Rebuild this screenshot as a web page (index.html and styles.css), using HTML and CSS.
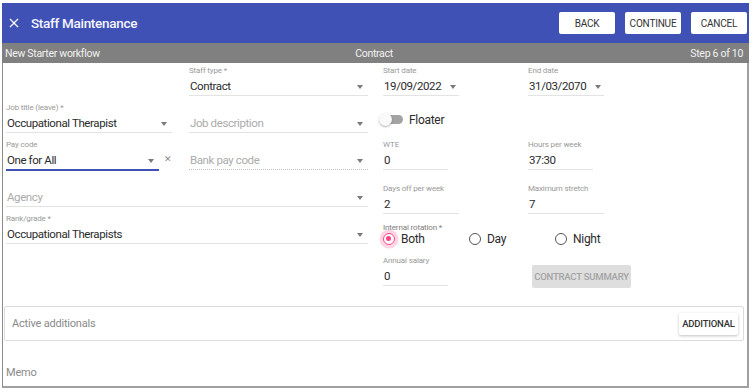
FILE: index.html
```html
<!DOCTYPE html>
<html lang="en">
<head>
    <meta charset="UTF-8">
    <meta name="viewport" content="width=device-width, initial-scale=1.0">
    <title>Staff Maintenance</title>
    <link rel="stylesheet" href="styles.css">
</head>
<body>
    <div class="app">
        <header class="toolbar">
            <span class="toolbar-close">
                <svg viewBox="0 0 24 24">
                    <path d="M19 6.41L17.59 5 12 10.59 6.41 5 5 6.41 10.59 12 5 17.59 6.41 19 12 13.41 17.59 19 19 17.59 13.41 12z"/>
                </svg>
            </span>
            <h1 class="toolbar-title">Staff Maintenance</h1>
            <div class="toolbar-actions">
                <button class="btn">Back</button>
                <button class="btn">Continue</button>
                <button class="btn">Cancel</button>
            </div>
        </header>

        <div class="stepbar">
            <span>New Starter workflow</span>
            <span class="stepbar-center">Contract</span>
            <span class="stepbar-right">Step 6 of 10</span>
        </div>

        <div class="panel">
            <div class="form">
                <!-- левая часть -->
                <div class="form-left">
                    <div class="field"></div>
                    <div class="field">
                        <div class="field-label">Staff type *</div>
                        <div class="field-control">Contract <i class="arrow"></i></div>
                    </div>

                    <div class="field">
                        <div class="field-label">Job title (leave) *</div>
                        <div class="field-control">Occupational Therapist <i class="arrow"></i></div>
                    </div>
                    <div class="field">
                        <div class="field-label"></div>
                        <div class="field-control placeholder">Job description <i class="arrow"></i></div>
                    </div>

                    <div class="field">
                        <div class="field-label">Pay code</div>
                        <div class="field-row">
                            <div class="field-control focused">One for All <i class="arrow"></i></div>
                            <span class="field-clear">&#x2715;</span>
                        </div>
                    </div>
                    <div class="field">
                        <div class="field-label"></div>
                        <div class="field-control placeholder disabled">Bank pay code <i class="arrow"></i></div>
                    </div>

                    <div class="field wide">
                        <div class="field-label"></div>
                        <div class="field-control placeholder">Agency <i class="arrow"></i></div>
                    </div>

                    <div class="field wide">
                        <div class="field-label">Rank/grade *</div>
                        <div class="field-control">Occupational Therapists <i class="arrow"></i></div>
                    </div>
                </div>

                <!-- правая часть -->
                <div class="form-right">
                    <div class="form-row">
                        <div class="field date">
                            <div class="field-label">Start date</div>
                            <div class="field-control">19/09/2022 <i class="arrow"></i></div>
                        </div>
                        <div class="field date">
                            <div class="field-label">End date</div>
                            <div class="field-control">31/03/2070 <i class="arrow"></i></div>
                        </div>
                    </div>

                    <div class="form-row toggle-row">
                        <label class="toggle">
                            <span class="toggle-track"><span class="toggle-thumb"></span></span>
                            Floater
                        </label>
                    </div>

                    <div class="form-row spaced">
                        <div class="field short">
                            <div class="field-label">WTE</div>
                            <div class="field-control">0</div>
                        </div>
                        <div class="field short">
                            <div class="field-label">Hours per week</div>
                            <div class="field-control">37:30</div>
                        </div>
                    </div>

                    <div class="form-row">
                        <div class="field date">
                            <div class="field-label">Days off per week</div>
                            <div class="field-control">2</div>
                        </div>
                        <div class="field date">
                            <div class="field-label">Maximum stretch</div>
                            <div class="field-control">7</div>
                        </div>
                    </div>

                    <div class="radio-group">
                        <div class="field-label">Internal rotation *</div>
                        <div class="radio-options">
                            <span class="radio checked"><i class="radio-dot"></i>Both</span>
                            <span class="radio"><i class="radio-dot"></i>Day</span>
                            <span class="radio"><i class="radio-dot"></i>Night</span>
                        </div>
                    </div>

                    <div class="form-row">
                        <div class="field short">
                            <div class="field-label">Annual salary</div>
                            <div class="field-control">0</div>
                        </div>
                        <div class="summary-cell">
                            <button class="btn btn-disabled">Contract summary</button>
                        </div>
                    </div>
                </div>
            </div>

            <div class="additionals">
                <span>Active additionals</span>
                <button class="btn">Additional</button>
            </div>

            <div class="memo">Memo</div>
        </div>
    </div>
</body>
</html>
```

FILE: styles.css
```css
/* Общие стили */
body {
    margin: 0;
    font-family: Roboto, "Noto Sans", sans-serif;
    color: #2b2b2b;
    background: #fff;
}

.app {
    width: 747px;
    margin: 3px 0 0 2px;
}

/* Верхняя панель */
.toolbar {
    height: 40px;
    background-color: #3f51b5;
    display: flex;
    align-items: center;
    padding: 0 2px 0 6px;
    box-sizing: border-box;
}

.toolbar-close {
    width: 12px;
    height: 12px;
    display: flex;
}

.toolbar-close svg {
    width: 12px;
    height: 12px;
    fill: #fff;
    transform: scale(1.3);
}

.toolbar-title {
    margin: 0 0 0 11px;
    font-size: 13.5px;
    font-weight: 500;
    letter-spacing: -0.3px;
    color: #f4f4ff;
    flex: 1;
}

.toolbar-actions {
    display: flex;
    gap: 10px;
}

.btn {
    font-family: Roboto, sans-serif;
    font-size: 10px;
    font-weight: 400;
    letter-spacing: -0.2px;
    text-transform: uppercase;
    color: #333;
    background-color: #fff;
    border: none;
    border-radius: 2px;
    height: 22px;
    padding: 0;
    cursor: pointer;
}

.toolbar .btn {
    width: 56px;
}

/* Полоса шагов */
.stepbar {
    height: 20px;
    background-color: #808080;
    color: #f2f2f2;
    font-size: 10.5px;
    letter-spacing: -0.3px;
    display: grid;
    grid-template-columns: 1fr auto 1fr;
    align-items: center;
    padding: 0 6px 0 3px;
}

.stepbar-right {
    text-align: right;
}

/* Рамка формы */
.panel {
    height: 325px;
    border-left: 1px solid #8c8c8c;
    border-right: 2px solid #a0a0a0;
    border-bottom: 2px solid #a0a0a0;
    box-sizing: border-box;
    padding: 0 2px 0 3px;
}

.form {
    display: flex;
    gap: 15px;
}

.form-left {
    width: 362px;
    display: grid;
    grid-template-columns: 166px 179px;
    column-gap: 17px;
    grid-auto-rows: 37px;
}

.form-right {
    flex: 1;
}

.form-row {
    display: grid;
    grid-template-columns: 145px 1fr;
    height: 37px;
}

.form-row.spaced {
    margin-bottom: 7px;
}

/* Поля */
.field {
    padding-top: 3px;
    box-sizing: border-box;
}

.field.wide {
    grid-column: span 2;
}

.field.date {
    width: 76px;
}

.field.short {
    width: 65px;
}

.field-label {
    height: 10px;
    line-height: 10px;
    font-size: 8px;
    letter-spacing: -0.15px;
    color: #999;
    white-space: nowrap;
}

.field-control {
    margin-top: 2px;
    height: 17px;
    line-height: 17px;
    font-size: 11.5px;
    letter-spacing: -0.4px;
    border-bottom: 1px solid #e3e3e3;
    display: flex;
    justify-content: space-between;
    align-items: center;
    padding-left: 1px;
}

.field-control.placeholder {
    color: #ababab;
}

.field-control.disabled {
    border-bottom: 1px dotted #c4c4c4;
}

.field-control.focused {
    border-bottom: 1px solid #3f51b5;
    width: 155px;
    box-shadow: 0 1px 0 #3f51b5;
}

.field-row {
    display: flex;
    align-items: flex-start;
    gap: 5px;
}

.field-clear {
    margin-top: 4px;
    font-size: 9px;
    color: #8a8a8a;
}

.arrow {
    width: 0;
    height: 0;
    border-left: 3.5px solid transparent;
    border-right: 3.5px solid transparent;
    border-top: 4px solid #7a7a7a;
    margin-right: 5px;
}

.field.date .arrow {
    margin-right: 3px;
}

/* Переключатель */
.toggle-row {
    display: flex;
    align-items: center;
}

.toggle {
    display: flex;
    align-items: center;
    gap: 6px;
    font-size: 12px;
    letter-spacing: -0.3px;
    color: #2b2b2b;
    margin: 2px 0 0 -3px;
}

.toggle-track {
    position: relative;
    width: 23px;
    height: 9px;
    border-radius: 5px;
    background-color: #a3a3a3;
}

.toggle-thumb {
    position: absolute;
    top: -2px;
    left: -1px;
    width: 13px;
    height: 13px;
    border-radius: 50%;
    background-color: #fafafa;
    box-shadow: 0 1px 2px rgba(0, 0, 0, 0.3);
}

/* Радиокнопки */
.radio-group {
    height: 35px;
    padding-top: 5px;
    box-sizing: border-box;
}

.radio-group .field-label {
    color: #7d7d7d;
}

.radio-options {
    display: flex;
    margin-top: -1px;
}

.radio {
    display: flex;
    align-items: center;
    gap: 6px;
    width: 86px;
    font-size: 12px;
    letter-spacing: -0.3px;
}

.radio-dot {
    position: relative;
    width: 12px;
    height: 12px;
    border: 1.5px solid #555;
    border-radius: 50%;
    box-sizing: border-box;
}

.radio.checked .radio-dot {
    border-color: #ff4081;
    box-shadow: 0 0 0 3.5px rgba(255, 64, 129, 0.22);
}

.radio.checked .radio-dot::after {
    content: "";
    position: absolute;
    top: 2px;
    left: 2px;
    width: 5px;
    height: 5px;
    border-radius: 50%;
    background-color: #ff4081;
}

.summary-cell {
    padding: 12px 0 0 4px;
}

.btn-disabled {
    width: 99px;
    height: 23px;
    background-color: #dedede;
    color: #a3a3a3;
    font-size: 9.5px;
    font-weight: 500;
}

/* Дополнительные */
.additionals {
    margin: 16px 1px 0 -2px;
    height: 35px;
    border: 1px solid #dcdcdc;
    border-radius: 2px;
    box-sizing: border-box;
    display: flex;
    align-items: center;
    justify-content: space-between;
    padding: 0 5px 0 7px;
    font-size: 11px;
    letter-spacing: -0.2px;
    color: #8a8a8a;
}

.additionals .btn {
    width: 59px;
    font-size: 9.5px;
    font-weight: 500;
    box-shadow: 0 1px 3px rgba(0, 0, 0, 0.25);
}

.memo {
    margin-top: 25px;
    font-size: 11px;
    letter-spacing: -0.2px;
    color: #8a8a8a;
}
```
